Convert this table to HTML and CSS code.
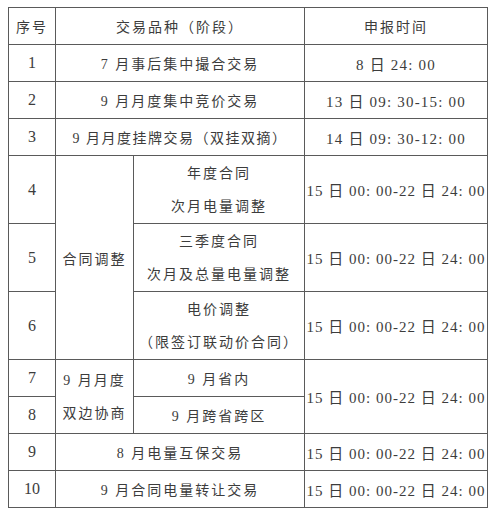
FILE: index.html
```html
<!DOCTYPE html>
<html lang="zh-CN">
<head>
<meta charset="utf-8">
<link rel="stylesheet" href="styles.css">
</head>
<body>
<table class="sched">
  <colgroup>
    <col class="c1"><col class="c2"><col class="c3"><col class="c4">
  </colgroup>
  <tr class="r">
    <td>序号</td>
    <td colspan="2">交易品种（阶段）</td>
    <td>申报时间</td>
  </tr>
  <tr class="r">
    <td class="num">1</td>
    <td colspan="2">7 月事后集中撮合交易</td>
    <td class="date">8 日 24: 00</td>
  </tr>
  <tr class="r">
    <td class="num">2</td>
    <td colspan="2">9 月月度集中竞价交易</td>
    <td class="date">13 日 09: 30-15: 00</td>
  </tr>
  <tr class="r">
    <td class="num">3</td>
    <td colspan="2" class="tight">9 月月度挂牌交易（双挂双摘）</td>
    <td class="date">14 日 09: 30-12: 00</td>
  </tr>
  <tr class="t">
    <td class="num">4</td>
    <td rowspan="3">合同调整</td>
    <td class="two">年度合同<br>次月电量调整</td>
    <td class="time">15 日 00: 00-22 日 24: 00</td>
  </tr>
  <tr class="t">
    <td class="num">5</td>
    <td class="two">三季度合同<br>次月及总量电量调整</td>
    <td class="time">15 日 00: 00-22 日 24: 00</td>
  </tr>
  <tr class="t">
    <td class="num">6</td>
    <td class="two">电价调整<br>（限签订联动价合同）</td>
    <td class="time">15 日 00: 00-22 日 24: 00</td>
  </tr>
  <tr class="r">
    <td class="num">7</td>
    <td rowspan="2" class="two">9 月月度<br>双边协商</td>
    <td>9 月省内</td>
    <td rowspan="2" class="time">15 日 00: 00-22 日 24: 00</td>
  </tr>
  <tr class="r">
    <td class="num">8</td>
    <td>9 月跨省跨区</td>
  </tr>
  <tr class="r">
    <td class="num">9</td>
    <td colspan="2">8 月电量互保交易</td>
    <td class="time">15 日 00: 00-22 日 24: 00</td>
  </tr>
  <tr class="r">
    <td class="num">10</td>
    <td colspan="2">9 月合同电量转让交易</td>
    <td class="time">15 日 00: 00-22 日 24: 00</td>
  </tr>
</table>
</body>
</html>
```
FILE: styles.css
```css
html, body {
  margin: 0;
  padding: 0;
  background: #ffffff;
}
body {
  padding: 7px 0 0 8px;
}
.sched {
  border-collapse: collapse;
  table-layout: fixed;
  width: 480px;
  font-family: "Liberation Serif", "Noto Sans CJK SC", serif;
  font-size: 14px;
  color: #3c3c3c;
}
.c1 { width: 47px; }
.c2 { width: 78px; }
.c3 { width: 171px; }
.c4 { width: 183px; }
.sched td {
  border: 1.5px solid #5a5a5a;
  text-align: center;
  vertical-align: middle;
  padding: 0;
  letter-spacing: 2px;
  white-space: nowrap;
}
.r { height: 37px; }
.t { height: 68px; }
.sched td.num {
  font-size: 16px;
  letter-spacing: 0;
}
.sched td.two {
  line-height: 33px;
}
.sched td.date {
  font-size: 15px;
  letter-spacing: 1.2px;
}
.sched td.time {
  font-size: 15px;
  letter-spacing: 1px;
}
.sched td.tight {
  letter-spacing: 1.5px;
}
```
